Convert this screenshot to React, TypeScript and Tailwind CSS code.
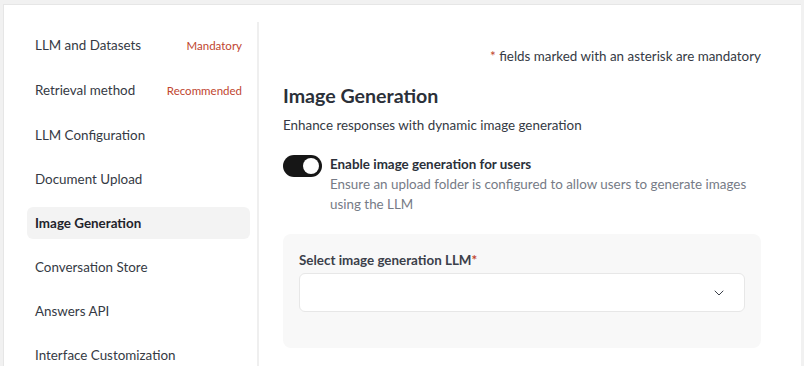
import { ChevronDown } from "lucide-react";

const navItems: { label: string; badge?: string; active?: boolean }[] = [
  { label: "LLM and Datasets", badge: "Mandatory" },
  { label: "Retrieval method", badge: "Recommended" },
  { label: "LLM Configuration" },
  { label: "Document Upload" },
  { label: "Image Generation", active: true },
  { label: "Conversation Store" },
  { label: "Answers API" },
  { label: "Interface Customization" },
];

export default function App() {
  return (
    <div
      className="h-[366px] w-[804px] overflow-hidden bg-[#f1f1f1] pl-[3px] pt-[4px] pr-[3px]"
      style={{ fontFamily: "Lato, 'Open Sans', sans-serif" }}
    >
      <div className="flex h-[400px] border-l border-t border-[#e6e6e6] bg-white">
        {/* Sidebar */}
        <aside className="mt-[17px] w-[255px] shrink-0 border-r-2 border-[#efefef] pl-[23px] pr-[7px] pt-[7px]">
          <ul className="flex flex-col gap-3">
            {navItems.map((item) => (
              <li
                key={item.label}
                className={`flex items-center justify-between rounded-md px-2 text-[13.4px] ${
                  item.badge ? "h-[33px]" : "h-8"
                } ${item.active ? "bg-[#f3f3f3] font-bold text-[#1f232b]" : "text-[#353a44]"}`}
              >
                <span>{item.label}</span>
                {item.badge && <span className="text-[11.5px] text-[#c0452f]">{item.badge}</span>}
              </li>
            ))}
          </ul>
        </aside>

        {/* Main content */}
        <main className="flex-1 pl-6 pr-[40px] pt-[41px]">
          <p className="text-right text-[13.4px] leading-5 text-[#353a44]">
            <span className="text-[#c0452f]">*</span> fields marked with an asterisk are mandatory
          </p>
          <h2 className="mt-4 text-[19.6px] font-bold leading-7 text-[#2b3039]">Image Generation</h2>
          <p className="mt-[5px] text-[13.4px] leading-5 text-[#353a44]">
            Enhance responses with dynamic image generation
          </p>

          <div className="mt-[19px] flex gap-2">
            <button className="mt-px flex h-[22px] w-[39px] shrink-0 items-center justify-end rounded-full bg-[#161616] px-[3px]">
              <span className="h-4 w-4 rounded-full bg-white" />
            </button>
            <div>
              <p className="text-[13.4px] font-bold leading-5 text-[#2b3039]">Enable image generation for users</p>
              <p className="text-[13.4px] leading-5 text-[#767b86]">
                Ensure an upload folder is configured to allow users to generate images using the LLM
              </p>
            </div>
          </div>

          <div className="mt-5 rounded-lg bg-[#f8f8f8] px-4 pb-9 pt-4">
            <label className="block text-[13.4px] font-bold leading-5 text-[#3b404a]">
              Select image generation LLM<span className="text-[#c0452f]">*</span>
            </label>
            <div className="mt-[3px] flex h-[39px] items-center justify-end rounded-md border border-[#e7e7e7] bg-white pr-[17px]">
              <ChevronDown size={16} strokeWidth={1.5} className="text-[#3b404a]" />
            </div>
          </div>
        </main>
      </div>
    </div>
  );
}
